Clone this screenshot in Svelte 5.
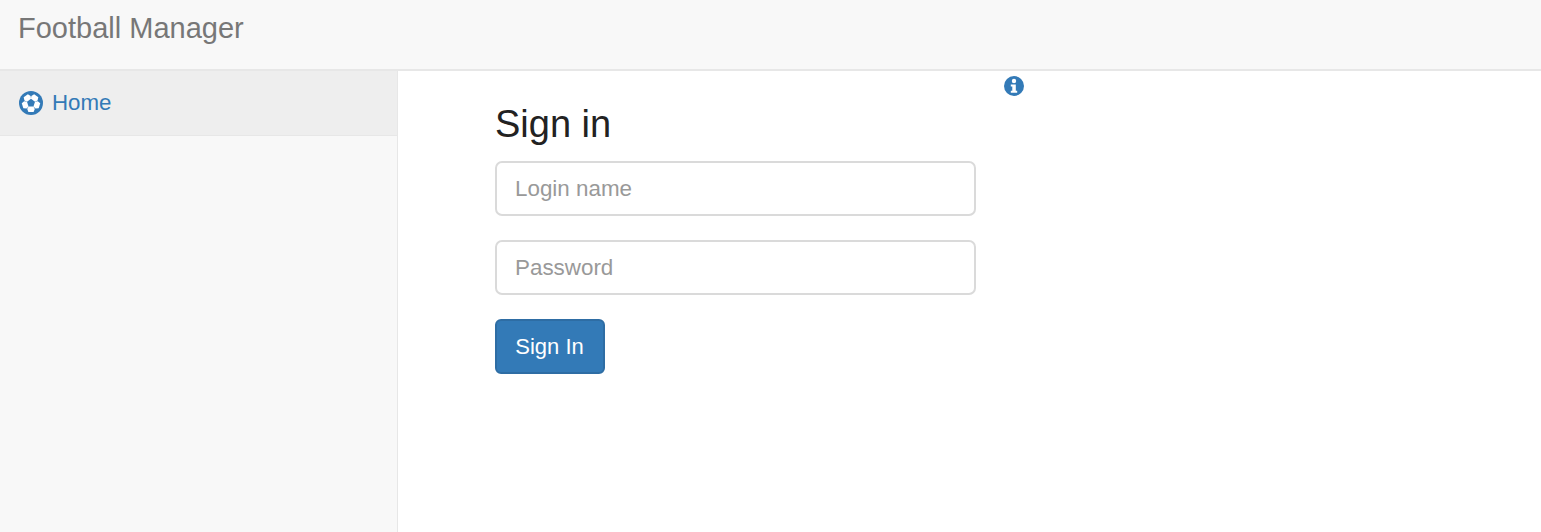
<script>
    let login = "";
    let password = "";
    const patches = [36, 108, 180, 252, 324];
</script>

<div class="page">
    <header class="navbar">
        <a class="brand" href="#top">Football Manager</a>
    </header>
    <div class="body">
        <aside class="sidebar">
            <a class="nav-item" href="#top">
                <svg class="ball" viewBox="0 0 24 24" aria-hidden="true">
                    <circle cx="12" cy="12" r="12" fill="#337ab7" />
                    {#each patches as angle}
                        <path
                            d="M9.500 8.600h5l1.300-2.500-1.200-3h-5.200l-1.200 3z"
                            fill="#fff"
                            transform="rotate({angle} 12 12)"
                        />
                    {/each}
                </svg>
                <span>Home</span>
            </a>
        </aside>
        <main class="content">
            <form class="signin">
                <h2>Sign in</h2>
                <input class="field" type="text" placeholder="Login name" bind:value={login} />
                <input class="field" type="password" placeholder="Password" bind:value={password} />
                <button class="btn" type="button">Sign In</button>
            </form>
            <svg class="info" viewBox="0 0 20 20" aria-hidden="true">
                <circle cx="10" cy="10" r="10" fill="#337ab7" />
                <circle cx="10" cy="5" r="2.200" fill="#fff" />
                <path d="M6.800 8.500h5v6.300h1.400v1.900H6.800v-1.900h1.500v-4.400H6.800z" fill="#fff" />
            </svg>
        </main>
    </div>
</div>

<style>
    :global(body) {
        margin: 0;
        background: #fff;
        font-family: "Liberation Sans", Arial, sans-serif;
    }
    .page {
        height: 532px;
        display: flex;
        flex-direction: column;
        overflow: hidden;
    }
    .navbar {
        height: 69px;
        flex-shrink: 0;
        background: #f8f8f8;
        border-bottom: 2px solid #e7e7e7;
        padding-left: 18px;
    }
    .brand {
        display: block;
        padding-top: 11px;
        font-size: 29px;
        line-height: 34px;
        color: #777;
        text-decoration: none;
    }
    .body {
        flex: 1;
        display: flex;
    }
    .sidebar {
        width: 397px;
        flex-shrink: 0;
        background: #f8f8f8;
        border-right: 1px solid #e7e7e7;
    }
    .nav-item {
        height: 65px;
        box-sizing: border-box;
        display: flex;
        align-items: center;
        gap: 9px;
        padding: 0 0 0 19px;
        background: #eee;
        border-bottom: 1px solid #e7e7e7;
        color: #337ab7;
        font-size: 22.300px;
        text-decoration: none;
    }
    .ball {
        width: 24px;
        height: 24px;
    }
    .content {
        flex: 1;
        display: flex;
        align-items: flex-start;
        padding-left: 97px;
    }
    .signin {
        width: 481px;
        display: flex;
        flex-direction: column;
        align-items: flex-start;
    }
    h2 {
        margin: 30px 0 14px;
        font-size: 38px;
        line-height: 46px;
        font-weight: 400;
        color: #222;
    }
    .field {
        width: 100%;
        height: 55px;
        box-sizing: border-box;
        margin-bottom: 24px;
        padding: 0 18px;
        border: 2px solid #dadada;
        border-radius: 7px;
        background: #fff;
        font-family: inherit;
        font-size: 22.400px;
        color: #555;
    }
    .field::placeholder {
        color: #999;
        opacity: 1;
    }
    .btn {
        height: 55px;
        width: 110px;
        padding: 0 1px 0 0;
        border: 2px solid #2e6da4;
        border-radius: 6px;
        background: #337ab7;
        color: #fff;
        font-family: inherit;
        font-size: 22px;
    }
    .info {
        width: 20px;
        height: 20px;
        margin: 5px 0 0 28px;
    }
</style>
